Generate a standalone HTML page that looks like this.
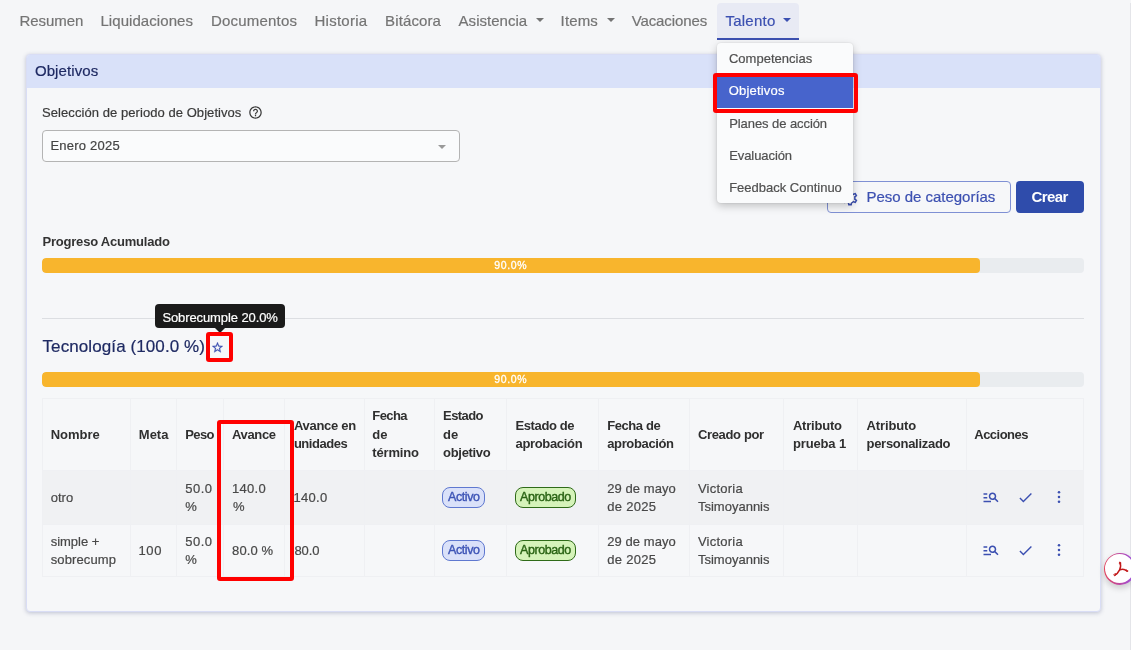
<!DOCTYPE html><html><head><meta charset="utf-8"><title>Objetivos</title><style>
*{box-sizing:border-box}
html,body{margin:0;padding:0}
body{width:1131px;height:650px;overflow:hidden;position:relative;background:#f5f6f8;font-family:"Liberation Sans",sans-serif}
#w{position:absolute;left:0;top:0;width:1131px;height:650px;overflow:hidden;will-change:transform}
.a{position:absolute}
.t{position:absolute;line-height:1;white-space:nowrap;-webkit-text-stroke:.2px}
.vl{position:absolute;top:399px;width:1px;height:177px;background:#eff0f3}
.hl{position:absolute;left:43px;width:1041px;height:1px;background:#eff0f3}
.bar{position:absolute;left:42px;width:1042px;height:15px;border-radius:4px;background:#e9ecef;overflow:hidden}
.bar i{display:block;width:938px;height:15px;background:#f8b52d;border-radius:4px}
.badge{position:absolute;height:20.5px;border-radius:8px;border:1px solid}
.caret{position:absolute;width:0;height:0;border-left:4px solid transparent;border-right:4px solid transparent;border-top:4.5px solid #747474}
.redbox{position:absolute;border:4px solid #ff0000;border-radius:3px}
</style></head><body><div id="w">
<div class="a" style="left:1130px;top:3px;width:1px;height:647px;background:#e4e5e9"></div>
<div class="a" style="left:717px;top:3px;width:82px;height:36.5px;background:#e8eaf4;border-radius:4px 4px 0 0;border-bottom:2px solid #3c50b1"></div>
<div class="caret" style="left:536.1px;top:18px"></div>
<div class="caret" style="left:606.7px;top:18px"></div>
<div class="caret" style="left:782.9px;top:18px;border-top-color:#3c50b1"></div>
<div class="a" style="left:26px;top:54px;width:1075px;height:558px;background:#f6f7f9;border:1px solid #d9ddf5;border-radius:4px;box-shadow:0 1px 4px rgba(60,70,120,.3)"></div>
<div class="a" style="left:27px;top:55px;width:1072.5px;height:33px;background:#d9e1f9;border-radius:3px 3px 0 0"></div>
<div class="a" style="left:42px;top:130px;width:417.5px;height:31.5px;background:#fafbfc;border:1px solid #b4b4b4;border-radius:4px"></div>
<div class="caret" style="left:438.3px;top:144.8px;border-top-color:#999;border-top-width:4px"></div>
<svg class="a" style="left:247.5px;top:104.8px" width="15" height="15" viewBox="0 0 24 24"><path fill="#3a3a3a" d="M11 18h2v-2h-2v2zm1-16C6.480 2 2 6.480 2 12s4.480 10 10 10 10-4.480 10-10S17.520 2 12 2zm0 18c-4.410 0-8-3.590-8-8s3.590-8 8-8 8 3.590 8 8-3.590 8-8 8zm0-14c-2.210 0-4 1.790-4 4h2c0-1.100.9-2 2-2s2 .9 2 2c0 2-3 1.750-3 5h2c0-2.250 3-2.500 3-5 0-2.210-1.790-4-4-4z"/></svg>
<div class="a" style="left:827px;top:181px;width:184px;height:32px;border:1px solid #7f90d4;border-radius:4px"></div>
<svg class="a" style="left:840.5px;top:189.2px" width="18" height="18" viewBox="0 0 24 24"><path fill="#3c50b1" d="M19.43 12.98c.04-.32.07-.64.07-.98 0-.34-.03-.66-.07-.98l2.11-1.65c.19-.15.24-.42.12-.64l-2-3.46c-.09-.16-.26-.25-.44-.25-.06 0-.12.01-.17.03l-2.49 1c-.52-.4-1.08-.73-1.69-.98l-.38-2.65C14.46 2.18 14.25 2 14 2h-4c-.25 0-.46.18-.49.42l-.38 2.65c-.61.25-1.17.59-1.69.98l-2.49-1c-.06-.02-.12-.03-.18-.03-.17 0-.34.09-.43.25l-2 3.46c-.13.22-.07.49.12.64l2.11 1.65c-.04.32-.07.65-.07.98 0 .33.03.66.07.98l-2.11 1.65c-.19.15-.24.42-.12.64l2 3.46c.09.16.26.25.44.25.06 0 .12-.01.17-.03l2.49-1c.52.4 1.08.73 1.69.98l.38 2.65c.03.24.24.42.49.42h4c.25 0 .46-.18.49-.42l.38-2.65c.61-.25 1.17-.59 1.69-.98l2.49 1c.06.02.12.03.18.03.17 0 .34-.09.43-.25l2-3.46c.12-.22.07-.49-.12-.64l-2.11-1.65zm-1.98-1.71c.04.31.05.52.05.73 0 .21-.02.43-.05.73l-.14 1.13.89.7 1.08.84-.7 1.21-1.27-.51-1.04-.42-.9.68c-.43.32-.84.56-1.25.73l-1.06.43-.16 1.13-.2 1.35h-1.4l-.19-1.35-.16-1.13-1.06-.43c-.43-.18-.83-.41-1.23-.71l-.91-.7-1.06.43-1.27.51-.7-1.21 1.08-.84.89-.7-.14-1.13c-.03-.31-.05-.54-.05-.74s.02-.43.05-.73l.14-1.13-.89-.7-1.08-.84.7-1.21 1.27.51 1.04.42.9-.68c.43-.32.84-.56 1.25-.73l1.06-.43.16-1.13.2-1.35h1.39l.19 1.35.16 1.13 1.06.43c.43.18.83.41 1.23.71l.91.7 1.06-.43 1.27-.51.7 1.21-1.07.85-.89.7.14 1.13zM12 8c-2.21 0-4 1.79-4 4s1.79 4 4 4 4-1.79 4-4-1.79-4-4-4zm0 6c-1.1 0-2-.9-2-2s.9-2 2-2 2 .9 2 2-.9 2-2 2z"/></svg>
<div class="a" style="left:1016px;top:181px;width:68px;height:32.4px;background:#2f4cab;border-radius:4px"></div>
<div class="bar" style="top:258px"><i></i></div>
<div class="bar" style="top:372px"><i></i></div>
<div class="a" style="left:42px;top:318px;width:1042px;height:1px;background:#dcdee2"></div>
<svg class="a" style="left:211px;top:340.8px" width="13" height="13" viewBox="0 0 24 24"><path fill="#3c50b1" stroke="#3c50b1" stroke-width=".5" d="M22 9.240l-7.190-.62L12 2 9.190 8.630 2 9.240l5.460 4.730L5.820 21 12 17.270 18.180 21l-1.630-7.030L22 9.240zM12 15.400l-3.760 2.270 1-4.280-3.320-2.880 4.380-.38L12 6.100l1.710 4.040 4.380.38-3.320 2.880 1 4.280L12 15.400z"/></svg>
<div class="a" style="left:42px;top:398px;width:1042px;height:178.5px;border:1px solid #eff0f3"></div>
<div class="a" style="left:43px;top:470px;width:1040px;height:54px;background:#f0f1f3"></div>
<div class="vl" style="left:130.0px"></div>
<div class="vl" style="left:175.7px"></div>
<div class="vl" style="left:223.0px"></div>
<div class="vl" style="left:284.0px"></div>
<div class="vl" style="left:363.8px"></div>
<div class="vl" style="left:434.0px"></div>
<div class="vl" style="left:505.8px"></div>
<div class="vl" style="left:598.0px"></div>
<div class="vl" style="left:688.6px"></div>
<div class="vl" style="left:783.2px"></div>
<div class="vl" style="left:857.1px"></div>
<div class="vl" style="left:965.9px"></div>
<div class="hl" style="top:469.6px"></div>
<div class="hl" style="top:524px"></div>
<div class="badge" style="left:442.2px;top:487.2px;width:43.2px;background:#dae1f9;border-color:#5f78d0"></div>
<div class="badge" style="left:514.7px;top:487.2px;width:61.2px;background:#d5f3b9;border-color:#2f6b18"></div>
<div class="badge" style="left:442.2px;top:540.2px;width:43.2px;background:#dae1f9;border-color:#5f78d0"></div>
<div class="badge" style="left:514.7px;top:540.2px;width:61.2px;background:#d5f3b9;border-color:#2f6b18"></div>
<svg class="a" style="left:981.7px;top:488.1px" width="18" height="18" viewBox="0 0 24 24"><path fill="#3c50b1" d="M7 9H2V7h5v2zm0 3H2v2h5v-2zm13.590 7-3.830-3.830c-.8.520-1.740.830-2.760.830-2.760 0-5-2.240-5-5s2.240-5 5-5 5 2.240 5 5c0 1.020-.31 1.960-.83 2.750L22 17.590 20.590 19zM17 11c0-1.650-1.350-3-3-3s-3 1.350-3 3 1.350 3 3 3 3-1.350 3-3zM2 19h10v-2H2v2z"/></svg>
<svg class="a" style="left:1016.5px;top:488.7px" width="17" height="17" viewBox="0 0 24 24"><path fill="#3c50b1" d="M9 16.170L4.830 12l-1.420 1.410L9 19 21 7l-1.410-1.410z"/></svg>
<svg class="a" style="left:1050px;top:488.1px" width="18" height="18" viewBox="0 0 24 24"><g fill="#3c50b1"><circle cx="12" cy="5.600" r="1.700"/><circle cx="12" cy="12" r="1.700"/><circle cx="12" cy="18.400" r="1.700"/></g></svg>
<svg class="a" style="left:981.7px;top:541.1px" width="18" height="18" viewBox="0 0 24 24"><path fill="#3c50b1" d="M7 9H2V7h5v2zm0 3H2v2h5v-2zm13.590 7-3.830-3.830c-.8.520-1.740.830-2.760.830-2.760 0-5-2.240-5-5s2.240-5 5-5 5 2.240 5 5c0 1.020-.31 1.960-.83 2.750L22 17.590 20.590 19zM17 11c0-1.650-1.350-3-3-3s-3 1.350-3 3 1.350 3 3 3 3-1.350 3-3zM2 19h10v-2H2v2z"/></svg>
<svg class="a" style="left:1016.5px;top:541.7px" width="17" height="17" viewBox="0 0 24 24"><path fill="#3c50b1" d="M9 16.170L4.830 12l-1.420 1.410L9 19 21 7l-1.410-1.410z"/></svg>
<svg class="a" style="left:1050px;top:541.1px" width="18" height="18" viewBox="0 0 24 24"><g fill="#3c50b1"><circle cx="12" cy="5.600" r="1.700"/><circle cx="12" cy="12" r="1.700"/><circle cx="12" cy="18.400" r="1.700"/></g></svg>
<span class="t" style="left:19.5px;top:13px;font-size:15px;color:#747474;letter-spacing:-0.050px;">Resumen</span>
<span class="t" style="left:100.4px;top:13px;font-size:15px;color:#747474;letter-spacing:0.075px;">Liquidaciones</span>
<span class="t" style="left:211.0px;top:13px;font-size:15px;color:#747474;letter-spacing:0.200px;">Documentos</span>
<span class="t" style="left:314.5px;top:13px;font-size:15px;color:#747474;letter-spacing:0.257px;">Historia</span>
<span class="t" style="left:385.1px;top:13px;font-size:15px;color:#747474;letter-spacing:0.114px;">Bitácora</span>
<span class="t" style="left:458.6px;top:13px;font-size:15px;color:#747474;letter-spacing:0.022px;">Asistencia</span>
<span class="t" style="left:560.6px;top:13px;font-size:15px;color:#747474;letter-spacing:0.125px;">Items</span>
<span class="t" style="left:631.7px;top:13px;font-size:15px;color:#747474;letter-spacing:-0.100px;">Vacaciones</span>
<span class="t" style="left:725.4px;top:13px;font-size:15px;color:#3c50b1;letter-spacing:0.267px;">Talento</span>
<span class="t" style="left:34.9px;top:63px;font-size:15px;color:#1f2a63;letter-spacing:0.112px;">Objetivos</span>
<span class="t" style="left:42.1px;top:106px;font-size:13px;color:#3a3a3a;letter-spacing:0.062px;">Selección de periodo de Objetivos</span>
<span class="t" style="left:50.4px;top:139px;font-size:13px;color:#444444;letter-spacing:0.233px;">Enero 2025</span>
<span class="t" style="left:866.5px;top:189px;font-size:15px;color:#3c50b1;letter-spacing:-0.024px;">Peso de categorías</span>
<span class="t" style="left:1031.5px;top:189px;font-size:15px;color:#ffffff;font-weight:700;-webkit-text-stroke:0;letter-spacing:-0.600px;">Crear</span>
<span class="t" style="left:42.5px;top:235px;font-size:13px;color:#333333;font-weight:700;-webkit-text-stroke:0;letter-spacing:-0.212px;">Progreso Acumulado</span>
<span class="t" style="left:42.5px;top:338px;font-size:17px;color:#1f2a63;letter-spacing:0.095px;">Tecnología (100.0 %)</span>
<span class="t" style="left:50.7px;top:428px;font-size:13px;color:#2f2f2f;font-weight:700;-webkit-text-stroke:0;">Nombre</span>
<span class="t" style="left:138.8px;top:428px;font-size:13px;color:#2f2f2f;font-weight:700;-webkit-text-stroke:0;">Meta</span>
<span class="t" style="left:185.2px;top:428px;font-size:13px;color:#2f2f2f;font-weight:700;-webkit-text-stroke:0;letter-spacing:-0.600px;">Peso</span>
<span class="t" style="left:232.1px;top:428px;font-size:13px;color:#2f2f2f;font-weight:700;-webkit-text-stroke:0;letter-spacing:-0.380px;">Avance</span>
<span class="t" style="left:293.9px;top:419px;font-size:13px;color:#2f2f2f;font-weight:700;-webkit-text-stroke:0;letter-spacing:-0.287px;">Avance en</span>
<span class="t" style="left:293.9px;top:437px;font-size:13px;color:#2f2f2f;font-weight:700;-webkit-text-stroke:0;letter-spacing:-0.471px;">unidades</span>
<span class="t" style="left:372.3px;top:409px;font-size:13px;color:#2f2f2f;font-weight:700;-webkit-text-stroke:0;letter-spacing:-0.600px;">Fecha</span>
<span class="t" style="left:372.3px;top:428px;font-size:13px;color:#2f2f2f;font-weight:700;-webkit-text-stroke:0;">de</span>
<span class="t" style="left:372.3px;top:446px;font-size:13px;color:#2f2f2f;font-weight:700;-webkit-text-stroke:0;letter-spacing:-0.167px;">término</span>
<span class="t" style="left:443.1px;top:409px;font-size:13px;color:#2f2f2f;font-weight:700;-webkit-text-stroke:0;letter-spacing:-0.580px;">Estado</span>
<span class="t" style="left:443.1px;top:428px;font-size:13px;color:#2f2f2f;font-weight:700;-webkit-text-stroke:0;">de</span>
<span class="t" style="left:443.1px;top:446px;font-size:13px;color:#2f2f2f;font-weight:700;-webkit-text-stroke:0;letter-spacing:-0.314px;">objetivo</span>
<span class="t" style="left:515.5px;top:419px;font-size:13px;color:#2f2f2f;font-weight:700;-webkit-text-stroke:0;letter-spacing:-0.388px;">Estado de</span>
<span class="t" style="left:515.5px;top:437px;font-size:13px;color:#2f2f2f;font-weight:700;-webkit-text-stroke:0;letter-spacing:-0.333px;">aprobación</span>
<span class="t" style="left:607.2px;top:419px;font-size:13px;color:#2f2f2f;font-weight:700;-webkit-text-stroke:0;letter-spacing:-0.414px;">Fecha de</span>
<span class="t" style="left:607.2px;top:437px;font-size:13px;color:#2f2f2f;font-weight:700;-webkit-text-stroke:0;letter-spacing:-0.356px;">aprobación</span>
<span class="t" style="left:697.9px;top:428px;font-size:13px;color:#2f2f2f;font-weight:700;-webkit-text-stroke:0;letter-spacing:-0.344px;">Creado por</span>
<span class="t" style="left:792.9px;top:419px;font-size:13px;color:#2f2f2f;font-weight:700;-webkit-text-stroke:0;letter-spacing:-0.200px;">Atributo</span>
<span class="t" style="left:792.9px;top:437px;font-size:13px;color:#2f2f2f;font-weight:700;-webkit-text-stroke:0;letter-spacing:-0.129px;">prueba 1</span>
<span class="t" style="left:866.5px;top:419px;font-size:13px;color:#2f2f2f;font-weight:700;-webkit-text-stroke:0;letter-spacing:-0.114px;">Atributo</span>
<span class="t" style="left:866.5px;top:437px;font-size:13px;color:#2f2f2f;font-weight:700;-webkit-text-stroke:0;letter-spacing:-0.283px;">personalizado</span>
<span class="t" style="left:974.3px;top:428px;font-size:13px;color:#2f2f2f;font-weight:700;-webkit-text-stroke:0;letter-spacing:-0.529px;">Acciones</span>
<span class="t" style="left:50.7px;top:491px;font-size:13px;color:#484848;letter-spacing:0.033px;">otro</span>
<span class="t" style="left:185.2px;top:482px;font-size:13px;color:#484848;letter-spacing:0.500px;">50.0</span>
<span class="t" style="left:185.2px;top:500px;font-size:13px;color:#484848;letter-spacing:-0.600px;">%</span>
<span class="t" style="left:231.9px;top:482px;font-size:13px;color:#484848;letter-spacing:0.300px;">140.0</span>
<span class="t" style="left:232.9px;top:500px;font-size:13px;color:#484848;letter-spacing:-0.600px;">%</span>
<span class="t" style="left:293.5px;top:491px;font-size:13px;color:#484848;letter-spacing:0.300px;">140.0</span>
<span class="t" style="left:607.2px;top:482px;font-size:13px;color:#484848;letter-spacing:0.078px;">29 de mayo</span>
<span class="t" style="left:607.2px;top:500px;font-size:13px;color:#484848;letter-spacing:0.300px;">de 2025</span>
<span class="t" style="left:697.9px;top:482px;font-size:13px;color:#484848;letter-spacing:0.229px;">Victoria</span>
<span class="t" style="left:697.9px;top:500px;font-size:13px;color:#484848;letter-spacing:0.010px;">Tsimoyannis</span>
<span class="t" style="left:50.7px;top:535px;font-size:13px;color:#484848;letter-spacing:-0.029px;">simple +</span>
<span class="t" style="left:50.7px;top:553px;font-size:13px;color:#484848;letter-spacing:0.125px;">sobrecump</span>
<span class="t" style="left:138.5px;top:544px;font-size:13px;color:#484848;letter-spacing:0.600px;">100</span>
<span class="t" style="left:185.2px;top:535px;font-size:13px;color:#484848;letter-spacing:0.500px;">50.0</span>
<span class="t" style="left:185.2px;top:553px;font-size:13px;color:#484848;letter-spacing:-0.600px;">%</span>
<span class="t" style="left:232.1px;top:544px;font-size:13px;color:#484848;letter-spacing:0.080px;">80.0 %</span>
<span class="t" style="left:294.5px;top:544px;font-size:13px;color:#484848;letter-spacing:-0.133px;">80.0</span>
<span class="t" style="left:607.2px;top:535px;font-size:13px;color:#484848;letter-spacing:0.078px;">29 de mayo</span>
<span class="t" style="left:607.2px;top:553px;font-size:13px;color:#484848;letter-spacing:0.300px;">de 2025</span>
<span class="t" style="left:697.9px;top:535px;font-size:13px;color:#484848;letter-spacing:0.229px;">Victoria</span>
<span class="t" style="left:697.9px;top:553px;font-size:13px;color:#484848;letter-spacing:0.010px;">Tsimoyannis</span>
<span class="t" style="left:448.0px;top:491px;font-size:12.5px;color:#3d54b6;letter-spacing:-0.400px;-webkit-text-stroke:.4px;">Activo</span>
<span class="t" style="left:520.0px;top:491px;font-size:12.5px;color:#2a6414;letter-spacing:-0.429px;-webkit-text-stroke:.4px;">Aprobado</span>
<span class="t" style="left:448.0px;top:544px;font-size:12.5px;color:#3d54b6;letter-spacing:-0.400px;-webkit-text-stroke:.4px;">Activo</span>
<span class="t" style="left:520.0px;top:544px;font-size:12.5px;color:#2a6414;letter-spacing:-0.429px;-webkit-text-stroke:.4px;">Aprobado</span>
<span class="t" style="left:494.3px;top:260px;font-size:10.5px;color:#ffffff;letter-spacing:0.600px;-webkit-text-stroke:.3px;">90.0%</span>
<span class="t" style="left:494.3px;top:374px;font-size:10.5px;color:#ffffff;letter-spacing:0.600px;-webkit-text-stroke:.3px;">90.0%</span>
<div class="redbox" style="left:217px;top:420px;width:77px;height:160.5px;border-radius:3px"></div>
<div class="a" style="left:155px;top:304px;width:130px;height:24px;background:#1b1b1b;border-radius:4px;z-index:20"></div>
<div class="a" style="left:215.4px;top:328px;width:0;height:0;border-left:5px solid transparent;border-right:5px solid transparent;border-top:5px solid #1b1b1b;z-index:20"></div>
<div class="redbox" style="left:206px;top:332px;width:27px;height:30px;z-index:25"></div>
<div class="a" style="left:717px;top:43px;width:136px;height:160px;background:#fafbfc;border-radius:4px;box-shadow:0 3px 8px rgba(0,0,0,.22),0 0 2px rgba(0,0,0,.12);z-index:20"></div>
<div class="a" style="left:717px;top:75px;width:136px;height:33px;background:#4764cc;z-index:21"></div>
<div class="redbox" style="left:712.5px;top:73px;width:145.5px;height:39.5px;z-index:25"></div>
<span class="t" style="left:728.9px;top:52px;font-size:13px;color:#505050;letter-spacing:0.018px;z-index:30;">Competencias</span>
<span class="t" style="left:728.7px;top:84px;font-size:13px;color:#ffffff;letter-spacing:0.200px;z-index:30;">Objetivos</span>
<span class="t" style="left:729.2px;top:117px;font-size:13px;color:#505050;letter-spacing:-0.073px;z-index:30;">Planes de acción</span>
<span class="t" style="left:729.2px;top:149px;font-size:13px;color:#505050;letter-spacing:-0.078px;z-index:30;">Evaluación</span>
<span class="t" style="left:729.2px;top:181px;font-size:13px;color:#505050;letter-spacing:-0.006px;z-index:30;">Feedback Continuo</span>
<span class="t" style="left:162.4px;top:311px;font-size:13px;color:#ffffff;letter-spacing:-0.100px;z-index:30;">Sobrecumple 20.0%</span>
<div class="a" style="left:1103.5px;top:552.7px;width:32.3px;height:32.3px;border-radius:50%;background:linear-gradient(90deg,#e2435c,#a04fd6 85%);box-shadow:0 3px 6px rgba(0,0,0,.18);z-index:5"></div>
<div class="a" style="left:1105px;top:554.2px;width:29.3px;height:29.3px;border-radius:50%;background:#fff;z-index:6"></div>
<svg class="a" style="left:1111px;top:560px;z-index:7" width="20" height="18" viewBox="0 0 20 18"><g fill="none" stroke="#c2191a" stroke-linecap="round"><path stroke-width="1.500" d="M8.900 2.500C10.100 5 9.600 7.800 8.600 9.900 7.300 12.500 5.600 14.300 3.900 15.100"/><path stroke-width="1.300" d="M8.700 9.900C11 8.900 14 9.300 16 10.900"/><ellipse cx="9" cy="3.100" rx=".7" ry="1.100" stroke-width=".8"/><ellipse cx="3.900" cy="14.700" rx="1.100" ry=".9" stroke-width=".8" transform="rotate(-35 3.900 14.700)"/><ellipse cx="15.700" cy="10.700" rx="1.200" ry=".7" stroke-width=".8" transform="rotate(25 15.700 10.700)"/></g></svg>
</div></body></html>
